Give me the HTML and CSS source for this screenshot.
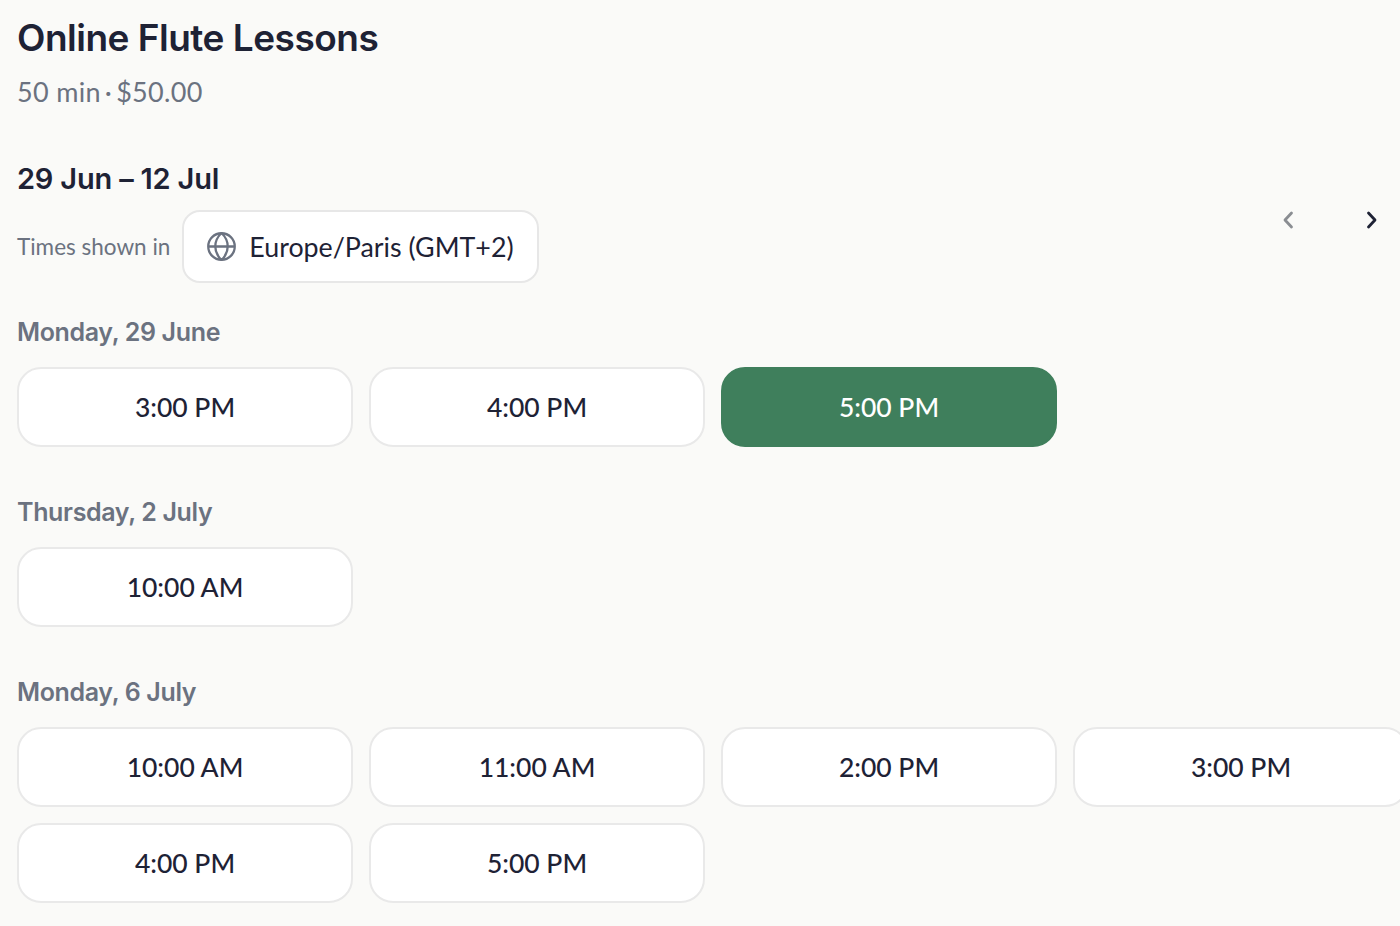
FILE: index.html
```html
<!DOCTYPE html>
<html lang="en">
<head>
<meta charset="utf-8">
<title>Online Flute Lessons</title>
<link rel="stylesheet" href="styles.css">
</head>
<body>
<main class="page">
  <header class="head">
    <h1 class="title">Online Flute Lessons</h1>
    <p class="meta"><span>50 min</span><span>·</span><span>$50.00</span></p>
  </header>
  <section class="range">
    <div class="range-main">
      <h2 class="range-title">29 Jun – 12 Jul</h2>
      <div class="tz-row">
        <span class="tz-label">Times shown in</span>
        <button class="tz-btn">
          <svg class="globe" viewBox="0 0 28 28" fill="none" stroke="#6b7280" stroke-width="2.200"><circle cx="14" cy="14" r="12.800"/><path d="M1 14h26M14 1c-8 7.500-8 18.500 0 26M14 1c8 7.500 8 18.500 0 26"/></svg>
          Europe/Paris (GMT+2)
        </button>
      </div>
    </div>
    <nav class="arrows">
      <svg class="arrow" viewBox="0 0 12 18" fill="none" stroke="#8a8d92" stroke-width="2.800" stroke-linecap="round" stroke-linejoin="round"><path d="M9.500 2 3 9l6.500 7"/></svg>
      <svg class="arrow" viewBox="0 0 12 18" fill="none" stroke="#1e2235" stroke-width="2.800" stroke-linecap="round" stroke-linejoin="round"><path d="m2.500 2 6.500 7-6.500 7"/></svg>
    </nav>
  </section>
  <section class="day">
    <h3 class="day-title">Monday, 29 June</h3>
    <div class="slots">
      <button class="slot">3:00 PM</button>
      <button class="slot">4:00 PM</button>
      <button class="slot active">5:00 PM</button>
    </div>
  </section>
  <section class="day">
    <h3 class="day-title">Thursday, 2 July</h3>
    <div class="slots">
      <button class="slot">10:00 AM</button>
    </div>
  </section>
  <section class="day">
    <h3 class="day-title">Monday, 6 July</h3>
    <div class="slots">
      <button class="slot">10:00 AM</button>
      <button class="slot">11:00 AM</button>
      <button class="slot">2:00 PM</button>
      <button class="slot">3:00 PM</button>
      <button class="slot">4:00 PM</button>
      <button class="slot">5:00 PM</button>
    </div>
  </section>
</main>
</body>
</html>
```
FILE: styles.css
```css
* { box-sizing: border-box; }
html, body { margin: 0; height: 100%; overflow: hidden; background: #fafaf8; }
body { font-family: "Lato", "Liberation Sans", sans-serif; color: #1e2235; }
.page { width: 1400px; height: 926px; padding: 15px 0 0 17px; overflow: hidden; }
.title { margin: 0; font: 600 37px/46px "Inter", sans-serif; letter-spacing: -0.5px; color: #1e2235; }
.meta { display: flex; gap: 4px; margin: 13px 0 0; font-size: 27px; line-height: 36px; color: #6b7280; letter-spacing: 0.3px; }
.range { display: flex; justify-content: space-between; align-items: center; margin-top: 50px; padding-right: 22px; }
.range-title { margin: 0; font: 600 29px/38px "Inter", sans-serif; letter-spacing: -0.2px; }
.tz-row { display: flex; align-items: center; gap: 12px; margin-top: 12px; }
.tz-label { font-size: 22.500px; color: #6b7280; }
.tz-btn { display: flex; align-items: center; gap: 13px; height: 73px; padding: 0 23px; background: #fff; border: 2px solid #e7e7e7; border-radius: 18px; font: inherit; font-size: 26.800px; color: #1e2235; }
.globe { width: 29px; height: 29px; }
.arrows { display: flex; gap: 72px; margin-top: -4px; }
.arrow { width: 12px; height: 18px; }
.day { margin-top: 48px; }
.range + .day { margin-top: 32px; }
.day-title { margin: 0 0 18px; font: 600 25px/34px "Inter", sans-serif; letter-spacing: -0.35px; color: #6b7280; }
.slots { display: grid; grid-template-columns: repeat(4, 336px); gap: 16px; }
.slot { height: 80px; background: #fff; border: 2px solid #e9e9e9; border-radius: 24px; font: inherit; font-size: 26.500px; font-weight: 500; color: #1e2235; }
.slot.active { background: #3f7f5c; border-color: #3f7f5c; color: #fff; }
```
